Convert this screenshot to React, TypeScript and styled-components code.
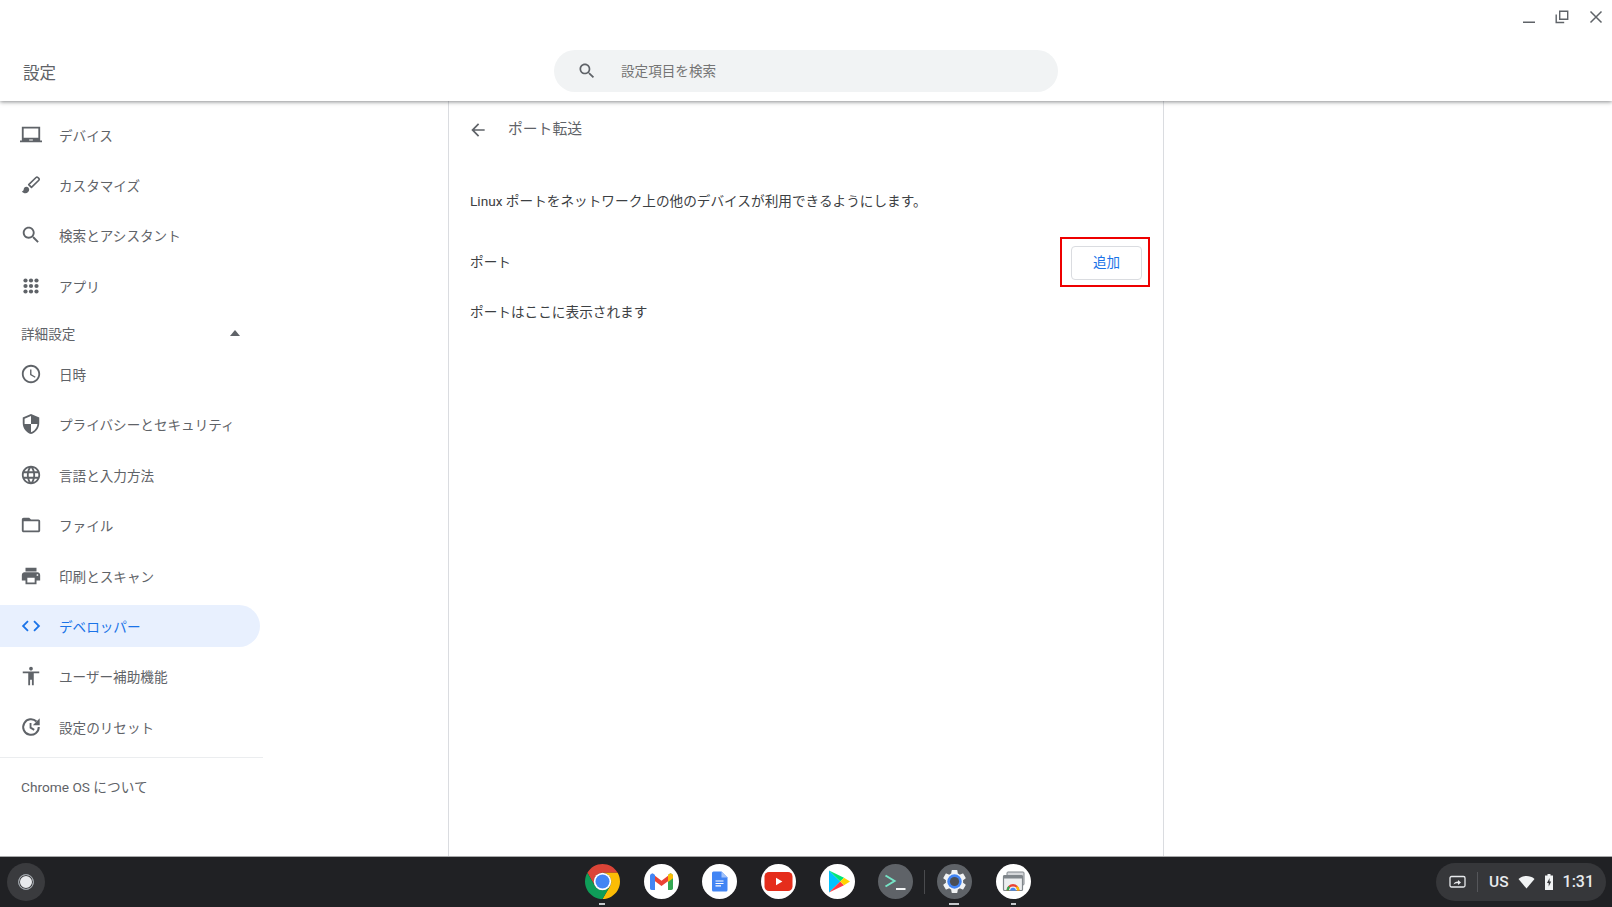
import React from "react";
import styled, { createGlobalStyle } from "styled-components";

const Global = createGlobalStyle`
  html, body { margin: 0; padding: 0; background: #fff; }
  body { font-family: Roboto, "Noto Sans CJK JP", sans-serif; color: #5f6368; overflow: hidden; }
  * { box-sizing: border-box; }
`;

const Page = styled.div`
  width: 1612px;
  height: 907px;
  display: flex;
  flex-direction: column;
`;
const Header = styled.header`
  height: 101px;
  flex: none;
  position: relative;
  z-index: 2;
  background: #fff;
  box-shadow: 0 1px 4px rgba(60, 64, 67, 0.6);
`;
const WindowBar = styled.div`
  height: 34px;
  display: flex;
  justify-content: flex-end;
`;
const WindowButton = styled.div`
  width: 33px;
  height: 34px;
  display: flex;
  align-items: center;
  justify-content: center;
  color: #5f6368;
`;
const HeaderMain = styled.div`
  height: 67px;
  padding-top: 7px;
  display: grid;
  grid-template-columns: 1fr 504px 1fr;
  align-items: center;
`;
const AppTitle = styled.div`
  padding: 6px 0 0 23px;
  font-size: 16.5px;
  line-height: 24px;
  color: #5f6368;
`;
const SearchBox = styled.div`
  height: 42px;
  border-radius: 21px;
  background: #f1f3f4;
  display: flex;
  align-items: center;
  gap: 24px;
  padding-left: 23px;
  color: #5f6368;
`;
const Placeholder = styled.span`
  font-size: 13.6px;
  padding-bottom: 2px;
  color: #757575;
`;
const Body = styled.div`
  flex: 1;
  min-height: 0;
  display: flex;
`;
const Sidebar = styled.nav`
  width: 449px;
  flex: none;
  border-right: 1px solid #dadce0;
  padding-top: 12.5px;
`;
const NavRow = styled.div<{ $active?: boolean }>`
  width: 260px;
  height: 42px;
  margin-bottom: 8.4px;
  padding-left: 20px;
  display: flex;
  align-items: center;
  gap: 17px;
  font-size: 13.6px;
  border-radius: 0 21px 21px 0;
  color: ${(p) => (p.$active ? "#1a73e8" : "#5f6368")};
  background: ${(p) => (p.$active ? "#e8f0fe" : "transparent")};
`;
const AdvancedRow = styled.div`
  width: 260px;
  height: 37px;
  margin: 0.5px 0 1px;
  padding: 0 20px 1px 21px;
  display: flex;
  align-items: center;
  justify-content: space-between;
  font-size: 13.6px;
  color: #5f6368;
`;
const NavDivider = styled.div`
  width: 263px;
  height: 1px;
  margin-top: 9px;
  background: #ebedef;
`;
const AboutRow = styled.div`
  padding-left: 21px;
  height: 20px;
  margin-top: 19.5px;
  line-height: 20px;
  font-size: 13.7px;
  color: #5f6368;
`;
const Content = styled.main`
  width: 715px;
  flex: none;
  border-right: 1px solid #dadce0;
  padding: 0 21px;
`;
const SubHeader = styled.div`
  height: 58px;
  display: flex;
  align-items: center;
  gap: 20px;
  margin-left: -2px;
  color: #5f6368;
`;
const SubTitle = styled.h1`
  margin: 0;
  font-size: 14.8px;
  font-weight: 400;
  line-height: 20px;
  position: relative;
  top: -1px;
  color: #5f6368;
`;
const BodyText = styled.p<{ $top: number }>`
  margin: ${(p) => p.$top}px 0 0;
  font-size: 13.65px;
  line-height: 20px;
  color: #3c4043;
`;
const PortRow = styled.div`
  margin-top: 35px;
  height: 34px;
  display: flex;
  align-items: center;
  justify-content: space-between;
`;
const PortLabel = styled.span`
  font-size: 13.65px;
  padding-bottom: 4px;
  color: #3c4043;
`;
const AddWrap = styled.div`
  position: relative;
`;
const AddButton = styled.button`
  width: 71px;
  height: 34px;
  border: 1px solid #dadce0;
  border-radius: 4px;
  background: #fff;
  color: #1a73e8;
  font: inherit;
  font-size: 13.5px;
  padding: 0 0 4px;
`;
const Highlight = styled.div`
  position: absolute;
  left: -11px;
  right: -8px;
  top: -9px;
  bottom: -7px;
  border: 2px solid #ee0000;
`;
const Shelf = styled.footer`
  height: 51px;
  flex: none;
  border-top: 1px solid #a8a9aa;
  background: #202124;
  display: grid;
  grid-template-columns: 1fr auto 1fr;
  align-items: center;
  padding: 0 6px;
`;
const Launcher = styled.div`
  width: 38px;
  height: 38px;
  margin-left: 1px;
  border-radius: 50%;
  background: #3a3b3e;
  display: flex;
  align-items: center;
  justify-content: center;
`;
const LauncherDot = styled.div`
  width: 16px;
  height: 16px;
  border-radius: 50%;
  background: #e8eaed;
  border: 1.5px solid #9aa0a6;
  box-shadow: inset 0 0 0 1px #3a3b3e;
`;
const Apps = styled.div`
  display: flex;
  align-items: center;
  margin-left: 3.5px;
`;
const AppSlot = styled.div`
  position: relative;
  width: 58.7px;
  height: 50px;
  padding-bottom: 2px;
  display: flex;
  align-items: center;
  justify-content: center;
`;
const RunDot = styled.span<{ $w: number }>`
  position: absolute;
  bottom: 2px;
  left: 50%;
  width: ${(p) => p.$w}px;
  height: 2px;
  margin-left: ${(p) => -p.$w / 2}px;
  background: #c4c7ca;
`;
const ShelfSeparator = styled.div`
  width: 1px;
  height: 24px;
  margin-left: -1px;
  background: #4a4b4e;
`;
const Tray = styled.div`
  justify-self: end;
  width: 170px;
  height: 38px;
  border-radius: 19px;
  background: #36373a;
  display: flex;
  align-items: center;
  padding-left: 13px;
  color: #e8eaed;
`;
const TrayDivider = styled.div`
  width: 1px;
  height: 20px;
  margin: 0 11px 0 10px;
  background: #55565a;
`;
const TrayText = styled.span<{ $size: number }>`
  font-size: ${(p) => p.$size}px;
  font-weight: 500;
  line-height: 20px;
`;
const TrayIcons = styled.div`
  display: flex;
  align-items: center;
  gap: 9px;
  margin: 0 9px 0 9px;
`;

const Icon = ({ d, size = 22 }: { d: string; size?: number }) => (
  <svg width={size} height={size} viewBox="0 0 24 24" fill="currentColor" style={{ flex: "none" }}>
    <path d={d} />
  </svg>
);

const P = {
  laptop: "M22 18V3H2v15H0v2h24v-2h-2zm-8 0h-4v-1h4v1zm6-3H4V5h16v10z",
  search: "M15.5 14h-.79l-.28-.27C15.41 12.59 16 11.11 16 9.5 16 5.91 13.09 3 9.5 3S3 5.91 3 9.5 5.91 16 9.5 16c1.61 0 3.09-.59 4.23-1.57l.27.28v.79l5 4.99L20.49 19l-4.99-5zm-6 0C7.01 14 5 11.99 5 9.5S7.01 5 9.5 5 14 7.01 14 9.5 11.99 14 9.5 14z",
  clock: "M11.99 2C6.47 2 2 6.48 2 12s4.47 10 9.99 10C17.52 22 22 17.52 22 12S17.52 2 11.99 2zM12 20c-4.42 0-8-3.58-8-8s3.58-8 8-8 8 3.58 8 8-3.58 8-8 8zm.5-13H11v6l5.25 3.15.75-1.23-4.5-2.67z",
  shield: "M12 1L3 5v6c0 5.55 3.84 10.74 9 12 5.16-1.26 9-6.45 9-12V5l-9-4zm0 10.99h7c-.53 4.12-3.28 7.79-7 8.94V12H5V6.3l7-3.11v8.8z",
  globe: "M11.99 2C6.47 2 2 6.48 2 12s4.47 10 9.99 10C17.52 22 22 17.52 22 12S17.52 2 11.99 2zm6.93 6h-2.95c-.32-1.25-.78-2.45-1.38-3.56 1.84.63 3.37 1.91 4.33 3.56zM12 4.04c.83 1.2 1.48 2.53 1.91 3.96h-3.82c.43-1.43 1.08-2.76 1.91-3.96zM4.26 14C4.1 13.36 4 12.69 4 12s.1-1.36.26-2h3.38c-.08.66-.14 1.32-.14 2 0 .68.06 1.34.14 2H4.26zm.82 2h2.95c.32 1.25.78 2.45 1.38 3.56-1.84-.63-3.37-1.9-4.33-3.56zm2.95-8H5.08c.96-1.66 2.49-2.93 4.33-3.56C8.81 5.55 8.35 6.75 8.03 8zM12 19.96c-.83-1.2-1.48-2.53-1.91-3.96h3.82c-.43 1.43-1.08 2.76-1.91 3.96zM14.34 14H9.66c-.09-.66-.16-1.32-.16-2 0-.68.07-1.35.16-2h4.68c.09.65.16 1.32.16 2 0 .68-.07 1.34-.16 2zm.25 5.56c.6-1.11 1.06-2.31 1.38-3.56h2.95c-.96 1.65-2.49 2.93-4.33 3.56zM16.36 14c.08-.66.14-1.32.14-2 0-.68-.06-1.34-.14-2h3.38c.16.64.26 1.31.26 2s-.1 1.36-.26 2h-3.38z",
  folder: "M20 6h-8l-2-2H4c-1.1 0-1.99.9-1.99 2L2 18c0 1.1.9 2 2 2h16c1.1 0 2-.9 2-2V8c0-1.1-.9-2-2-2zm0 12H4V8h16v10z",
  print: "M19 8H5c-1.66 0-3 1.34-3 3v6h4v4h12v-4h4v-6c0-1.66-1.34-3-3-3zm-3 11H8v-5h8v5zm3-7c-.55 0-1-.45-1-1s.45-1 1-1 1 .45 1 1-.45 1-1 1zm-1-9H6v4h12V3z",
  code: "M9.4 16.6L4.8 12l4.6-4.6L8 6l-6 6 6 6 1.4-1.4zm5.2 0l4.6-4.6-4.6-4.6L16 6l6 6-6 6-1.4-1.4z",
  access: "M12 2c1.1 0 2 .9 2 2s-.9 2-2 2-2-.9-2-2 .9-2 2-2zm9 7h-6v13h-2v-6h-2v6H9V9H3V7h18v2z",
  back: "M20 11H7.83l5.59-5.59L12 4l-8 8 8 8 1.41-1.41L7.83 13H20v-2z",
  gear: "M19.14 12.94c.04-.3.06-.61.06-.94 0-.32-.02-.64-.07-.94l2.03-1.58c.18-.14.23-.41.12-.61l-1.92-3.32c-.12-.22-.37-.29-.59-.22l-2.39.96c-.5-.38-1.03-.7-1.62-.94l-.36-2.54c-.04-.24-.24-.41-.48-.41h-3.84c-.24 0-.43.17-.47.41l-.36 2.54c-.59.24-1.13.57-1.62.94l-2.39-.96c-.22-.08-.47 0-.59.22L2.74 8.87c-.12.21-.08.47.12.61l2.03 1.58c-.05.3-.09.63-.09.94s.02.64.07.94l-2.03 1.58c-.18.14-.23.41-.12.61l1.92 3.32c.12.22.37.29.59.22l2.39-.96c.5.38 1.03.7 1.62.94l.36 2.54c.05.24.24.41.48.41h3.84c.24 0 .44-.17.47-.41l.36-2.54c.59-.24 1.13-.56 1.62-.94l2.39.96c.22.08.47 0 .59-.22l1.92-3.32c.12-.22.07-.47-.12-.61l-2.01-1.58z",
};

const BrushIcon = () => (
  <svg width={22} height={22} viewBox="0 0 24 24" fill="currentColor" style={{ flex: "none" }}>
    <path d="M7 14c-1.66 0-3 1.34-3 3 0 1.31-1.16 2-2 2 .92 1.22 2.49 2 4 2 2.21 0 4-1.79 4-4 0-1.66-1.34-3-3-3z" />
    <path d="M12.5 14.5l-3-3L17.5 3.8c.6-.6 1.4-.6 2 0l1 1c.6.6.6 1.4 0 2z" fill="none" stroke="currentColor" strokeWidth="1.8" strokeLinejoin="round" />
  </svg>
);

const ResetIcon = () => (
  <svg width={22} height={22} viewBox="0 0 24 24" fill="none" stroke="currentColor" style={{ flex: "none" }}>
    <path d="M20.500 12a8.500 8.500 0 1 1-2.500-6" strokeWidth="2.200" />
    <path d="M21.500 2.500v7.500h-7.500z" fill="currentColor" stroke="none" />
    <path d="M11.500 7.500v5.200l4 2.400" strokeWidth="2" />
  </svg>
);

const AppsIcon = () => (
  <svg width={22} height={22} viewBox="0 0 24 24" fill="currentColor" style={{ flex: "none" }}>
    {[6, 12, 18].flatMap((y) =>
      [6, 12, 18].map((x) => <circle key={`${x}-${y}`} cx={x} cy={y} r={2.300} />)
    )}
  </svg>
);

const ChromeLogo = () => (
  <svg width={35} height={35} viewBox="4 4 40 40">
    <path fill="#db4437" d="M41.32 14A20 20 0 0 0 6.68 14L15.34 29A10 10 0 0 1 24 14Z" />
    <path fill="#fbbc05" d="M41.32 14H24A10 10 0 0 1 32.66 29L24 44A20 20 0 0 0 41.32 14Z" />
    <path fill="#0f9d58" d="M6.68 14A20 20 0 0 0 24 44L32.66 29A10 10 0 0 1 15.34 29Z" />
    <circle cx="24" cy="24" r="10" fill="#fff" />
    <circle cx="24" cy="24" r="8" fill="#4285f4" />
  </svg>
);

const GmailLogo = () => (
  <svg width={35} height={35} viewBox="0 0 35 35">
    <circle cx="17.5" cy="17.5" r="17.5" fill="#fff" />
    <path fill="#ea4335" d="M8 9.5l9.500 7.200 9.500-7.200v5.500l-9.500 7.100L8 15z" />
    <path fill="#4285f4" d="M6 12c0-2 2-3.200 3.700-2l1.300.9V26H7.700C6.700 26 6 25.300 6 24.300z" />
    <path fill="#34a853" d="M24 10.900l1.300-.9c1.700-1.200 3.700 0 3.700 2v12.300c0 1-.7 1.700-1.700 1.700H24z" />
    <path fill="#fbbc04" d="M24 10.900l1.300-.9c1.700-1.200 3.700 0 3.700 2v2.200L24 17.900z" />
  </svg>
);

const DocsLogo = () => (
  <svg width={35} height={35} viewBox="0 0 35 35">
    <circle cx="17.5" cy="17.5" r="17.5" fill="#fff" />
    <path fill="#4285f4" d="M11.500 7.500h8l6 6v12.500a1.500 1.500 0 0 1-1.500 1.500H11.500a1.500 1.500 0 0 1-1.500-1.500V9a1.500 1.500 0 0 1 1.500-1.500z" />
    <path fill="#a1c2fa" d="M19.500 7.500l6 6h-6z" />
    <path fill="#fff" d="M13.500 16.500h8v1.100h-8zM13.500 18.900h8V20h-8zM13.500 21.300h5.500v1.100h-5.500z" />
  </svg>
);

const YoutubeLogo = () => (
  <svg width={35} height={35} viewBox="0 0 35 35">
    <circle cx="17.5" cy="17.5" r="17.5" fill="#fff" />
    <rect x="3.5" y="8" width="28" height="19" rx="4.5" fill="#e52d1b" />
    <path fill="#fff" d="M15 13.800l6.400 3.700-6.400 3.700z" />
  </svg>
);

const PlayLogo = () => (
  <svg width={35} height={35} viewBox="0 0 35 35">
    <circle cx="17.5" cy="17.5" r="17.5" fill="#fff" />
    <path fill="#00c3ff" d="M9 6.500v22l11.200-11z" />
    <path fill="#00e676" d="M9 6.500l11.200 11 3.800-3.800z" />
    <path fill="#ff3a44" d="M9 28.500l11.200-11 3.800 3.800z" />
    <path fill="#ffd400" d="M24 13.700l6 3.800-6 3.800-3.800-3.800z" />
  </svg>
);

const TerminalLogo = () => (
  <svg width={35} height={35} viewBox="0 0 35 35">
    <circle cx="17.5" cy="17.5" r="17.5" fill="#5f6368" />
    <path d="M7.500 11.500l9 5.500-9 5.500" fill="none" stroke="#76e4c6" strokeWidth="2" />
    <rect x="18" y="24" width="9.5" height="2" fill="#f1f3f4" />
  </svg>
);

const SettingsLogo = () => (
  <svg width={35} height={35} viewBox="0 0 35 35">
    <circle cx="17.5" cy="17.5" r="17.5" fill="#5f6368" />
    <g transform="translate(3.100 3.100) scale(1.200)">
      <path d={P.gear} fill="#f1f3f4" />
    </g>
    <circle cx="17.5" cy="17.5" r="7.200" fill="#4285f4" />
    <circle cx="17.5" cy="17.5" r="4.600" fill="#4b4e53" />
  </svg>
);

const WebAppLogo = () => (
  <svg width={35} height={35} viewBox="0 0 35 35">
    <circle cx="17.5" cy="17.5" r="17.5" fill="#fff" />
    <rect x="11" y="8" width="17" height="13" rx="1" fill="#d5d7da" stroke="#80868b" strokeWidth="1" />
    <rect x="7.5" y="11.5" width="19" height="15" rx="1" fill="#eceef0" stroke="#80868b" strokeWidth="1.2" />
    <path fill="#80868b" d="M7.500 11.500h19v3h-19z" />
    <path fill="#ea4335" d="M10.500 26.500a6.500 6.500 0 0 1 13 0h-2.400a4.100 4.100 0 0 0-8.200 0z" />
    <path fill="#fbbc04" d="M21.100 26.500a4.100 4.100 0 0 0-1.200-2.900l1.700-1.700a6.500 6.500 0 0 1 1.900 4.600z" />
    <path fill="#34a853" d="M10.500 26.500a6.500 6.500 0 0 1 1.900-4.600l1.700 1.700a4.100 4.100 0 0 0-1.200 2.900z" />
    <path fill="#4285f4" d="M14.200 26.500a2.800 2.800 0 0 1 5.600 0z" />
  </svg>
);

const mainNav: { label: string; icon: React.ReactNode }[] = [
  { label: "デバイス", icon: <Icon d={P.laptop} /> },
  { label: "カスタマイズ", icon: <BrushIcon /> },
  { label: "検索とアシスタント", icon: <Icon d={P.search} /> },
  { label: "アプリ", icon: <AppsIcon /> },
];
const advancedNav: { label: string; icon: React.ReactNode; active?: boolean }[] = [
  { label: "日時", icon: <Icon d={P.clock} /> },
  { label: "プライバシーとセキュリティ", icon: <Icon d={P.shield} /> },
  { label: "言語と入力方法", icon: <Icon d={P.globe} /> },
  { label: "ファイル", icon: <Icon d={P.folder} /> },
  { label: "印刷とスキャン", icon: <Icon d={P.print} /> },
  { label: "デベロッパー", icon: <Icon d={P.code} />, active: true },
  { label: "ユーザー補助機能", icon: <Icon d={P.access} /> },
  { label: "設定のリセット", icon: <ResetIcon /> },
];

export default function App() {
  return (
    <Page>
      <Global />
      <Header>
        <WindowBar>
          <WindowButton>
            <svg width="16" height="16" viewBox="0 0 16 16" style={{ marginLeft: -2 }}><rect x="2" y="12.500" width="12" height="1.500" fill="currentColor" /></svg>
          </WindowButton>
          <WindowButton>
            <svg width="16" height="16" viewBox="0 0 16 16" fill="none" stroke="currentColor" strokeWidth="1.4" style={{ marginLeft: -2 }}>
              <path d="M5.700 2.200h8v8h-8z" />
              <path d="M2.200 5.500v8h8" />
            </svg>
          </WindowButton>
          <WindowButton>
            <svg width="16" height="16" viewBox="0 0 16 16" fill="none" stroke="currentColor" strokeWidth="1.5">
              <path d="M2.500 2.500l11 11M13.500 2.500l-11 11" />
            </svg>
          </WindowButton>
        </WindowBar>
        <HeaderMain>
          <AppTitle>設定</AppTitle>
          <SearchBox>
            <Icon d={P.search} size={20} />
            <Placeholder>設定項目を検索</Placeholder>
          </SearchBox>
        </HeaderMain>
      </Header>
      <Body>
        <Sidebar>
          {mainNav.map((n) => (
            <NavRow key={n.label}>{n.icon}<span>{n.label}</span></NavRow>
          ))}
          <AdvancedRow>
            <span>詳細設定</span>
            <svg width="10" height="6" viewBox="0 0 10 6"><path d="M5 0l5 6H0z" fill="#5f6368" /></svg>
          </AdvancedRow>
          {advancedNav.map((n) => (
            <NavRow key={n.label} $active={n.active}>{n.icon}<span>{n.label}</span></NavRow>
          ))}
          <NavDivider />
          <AboutRow>Chrome OS について</AboutRow>
        </Sidebar>
        <Content>
          <SubHeader>
            <Icon d={P.back} size={20} />
            <SubTitle>ポート転送</SubTitle>
          </SubHeader>
          <BodyText $top={32}>Linux ポートをネットワーク上の他のデバイスが利用できるようにします。</BodyText>
          <PortRow>
            <PortLabel>ポート</PortLabel>
            <AddWrap>
              <AddButton>追加</AddButton>
              <Highlight />
            </AddWrap>
          </PortRow>
          <BodyText $top={22}>ポートはここに表示されます</BodyText>
        </Content>
      </Body>
      <Shelf>
        <Launcher><LauncherDot /></Launcher>
        <Apps>
          <AppSlot><ChromeLogo /><RunDot $w={6} /></AppSlot>
          <AppSlot><GmailLogo /></AppSlot>
          <AppSlot><DocsLogo /></AppSlot>
          <AppSlot><YoutubeLogo /></AppSlot>
          <AppSlot><PlayLogo /></AppSlot>
          <AppSlot><TerminalLogo /></AppSlot>
          <ShelfSeparator />
          <AppSlot><SettingsLogo /><RunDot $w={10} /></AppSlot>
          <AppSlot><WebAppLogo /><RunDot $w={5} /></AppSlot>
        </Apps>
        <Tray>
          <svg width="18" height="14" viewBox="0 0 18 14" fill="none" style={{ flex: "none" }}>
            <rect x="1" y="1.5" width="15" height="10.5" rx="1.5" stroke="#e8eaed" strokeWidth="1.3" />
            <path d="M4.500 9.500c.6-2 2-3 4.500-3V5l3 2.500L9 10V8.200c-2 0-3.400.4-4.500 1.300z" fill="#e8eaed" />
          </svg>
          <TrayDivider />
          <TrayText $size={15.5}>US</TrayText>
          <TrayIcons>
            <svg width="17" height="14" viewBox="0 0 17 14" style={{ flex: "none" }}>
              <path d="M0.500 4C2.800 1.800 5.500 1 8.500 1s5.700.8 8 3L8.500 13.500z" fill="#f1f3f4" />
            </svg>
            <svg width="10" height="16" viewBox="0 0 10 16" style={{ flex: "none" }}>
              <path d="M3.500 0h3v1.500H9V16H1V1.500h2.500z" fill="#f1f3f4" />
              <path d="M5.600 4L3 9h1.700v3.500L7.200 7.500H5.500z" fill="#36373a" />
            </svg>
          </TrayIcons>
          <TrayText $size={16}>1:31</TrayText>
        </Tray>
      </Shelf>
    </Page>
  );
}
